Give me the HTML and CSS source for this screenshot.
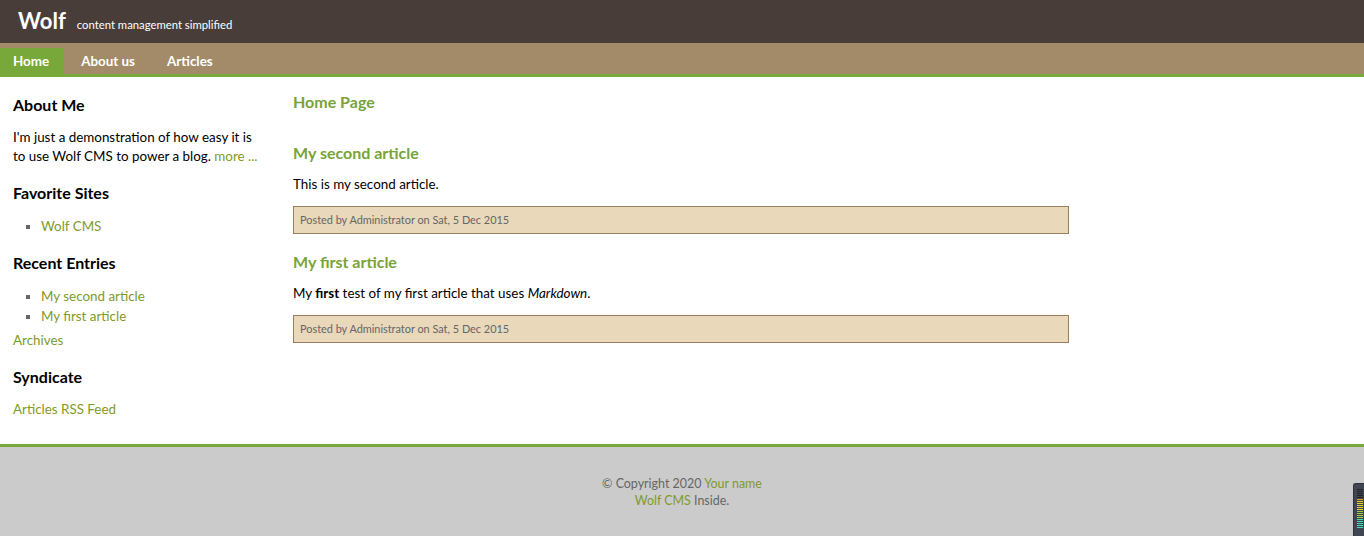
FILE: index.html
```html
<!DOCTYPE html>
<html>
<head>
<meta charset="utf-8">
<title>Wolf</title>
<link rel="stylesheet" href="styles.css">
</head>
<body>
<div class="header">
  <span class="logo">Wolf</span>
  <span class="tagline">content management simplified</span>
</div>
<div class="nav">
  <a class="tab current" href="#">Home</a>
  <a class="tab" href="#">About us</a>
  <a class="tab" href="#">Articles</a>
</div>
<div class="main">
  <div class="sidebar">
    <h3>About Me</h3>
    <p>I'm just a demonstration of how easy it is to use Wolf CMS to power a blog. <a href="#">more ...</a></p>
    <h3>Favorite Sites</h3>
    <ul>
      <li><a href="#">Wolf CMS</a></li>
    </ul>
    <h3>Recent Entries</h3>
    <ul>
      <li><a href="#">My second article</a></li>
      <li><a href="#">My first article</a></li>
    </ul>
    <p class="archives"><a href="#">Archives</a></p>
    <h3>Syndicate</h3>
    <p><a href="#">Articles RSS Feed</a></p>
  </div>
  <div class="content">
    <h2 class="page-title">Home Page</h2>
    <div class="entry">
      <h3 class="entry-title">My second article</h3>
      <p>This is my second article.</p>
      <p class="info">Posted by Administrator on Sat, 5 Dec 2015</p>
    </div>
    <div class="entry">
      <h3 class="entry-title">My first article</h3>
      <p>My <strong>first</strong> test of my first article that uses <em>Markdown</em>.</p>
      <p class="info">Posted by Administrator on Sat, 5 Dec 2015</p>
    </div>
  </div>
</div>
<div class="footer">
  <p>&copy; Copyright 2020 <a href="#">Your name</a><br><a href="#">Wolf CMS</a> Inside.</p>
</div>
<div class="meter">
  <div class="leds">
    <i class="off"></i><i class="off"></i><i class="off"></i><i class="off"></i><i class="off"></i>
    <i class="o"></i><i class="y"></i><i class="y"></i><i class="y"></i><i class="y"></i><i class="y"></i>
    <i class="g"></i><i class="g"></i><i class="g"></i><i class="g"></i><i class="c"></i><i class="c"></i><i class="c"></i><i class="c"></i><i class="c"></i>
  </div>
</div>
</body>
</html>
```

FILE: styles.css
```css
html, body {
  margin: 0;
  padding: 0;
}
body {
  font-family: Lato, "Open Sans", sans-serif;
  font-size: 13.4px;
  color: #000;
  background: #fff;
  position: relative;
  min-height: 536px;
}
a {
  color: #7f9a2a;
  text-decoration: none;
}
.header {
  background: #483d39;
  height: 43px;
  display: flex;
  align-items: baseline;
  padding-left: 18px;
  box-sizing: border-box;
  padding-top: 6px;
}
.logo {
  color: #fff;
  font-weight: bold;
  font-size: 22px;
  line-height: 30px;
}
.tagline {
  color: #fff;
  font-size: 11.3px;
  margin-left: 11px;
}
.nav {
  background: #a38b6a;
  height: 31px;
  border-bottom: 3px solid #78a83a;
  display: flex;
  align-items: flex-end;
}
.tab {
  color: #fff;
  font-weight: bold;
  font-size: 13.4px;
  height: 26px;
  line-height: 26px;
  padding: 0 15px 0 13px;
  margin-right: 4px;
}
.tab.current {
  background: #78a83a;
}
.main {
  display: flex;
  align-items: flex-start;
  min-height: 367px;
}
.sidebar {
  width: 250px;
  padding: 1px 30px 10px 13px;
}
.sidebar h3 {
  font-size: 16px;
  font-weight: bold;
  margin: 17px 0 13px;
  line-height: 20px;
}
.sidebar p {
  margin: 0 0 12px;
  line-height: 19px;
}
.sidebar p.archives {
  margin-top: 5px;
}
.sidebar ul {
  margin: 0;
  padding-left: 28px;
  list-style: square;
  line-height: 20px;
}
.sidebar li::marker {
  color: #666;
}
.content {
  width: 776px;
  padding-top: 15px;
}
.page-title {
  color: #78a33a;
  font-size: 16px;
  margin: 0 0 31px;
  line-height: 20px;
}
.entry-title {
  color: #78a33a;
  font-size: 16px;
  margin: 0 0 12px;
  line-height: 20px;
}
.entry p {
  margin: 0 0 12px;
  line-height: 19px;
}
.entry p.info {
  background: #e9d8b9;
  border: 1px solid #9a7f5f;
  color: #666;
  font-size: 10.9px;
  line-height: 26px;
  padding: 0 6px;
  margin: 0 0 18px;
}
.footer {
  border-top: 3px solid #78a83a;
  background: #cbcbcb;
  height: 92px;
  text-align: center;
  color: #666;
  font-size: 12.45px;
  box-sizing: border-box;
  padding-top: 28px;
}
.footer p {
  margin: 0;
  line-height: 17px;
}
.meter {
  position: absolute;
  right: 0;
  top: 483px;
  width: 10px;
  height: 53px;
  background: #3f4652;
  border-radius: 3px 0 0 0;
  border-left: 1px solid #2c323b;
  border-top: 1px solid #2c323b;
}
.leds {
  display: flex;
  flex-direction: column;
  gap: 1px;
  padding: 5px 0 0 3px;
}
.leds i {
  display: block;
  width: 6px;
  height: 1px;
  background: #222;
}
.leds i.o { background: #f0a020; }
.leds i.y { background: #e6d230; }
.leds i.g { background: #9ed040; }
.leds i.c { background: #40e0b0; }
```
